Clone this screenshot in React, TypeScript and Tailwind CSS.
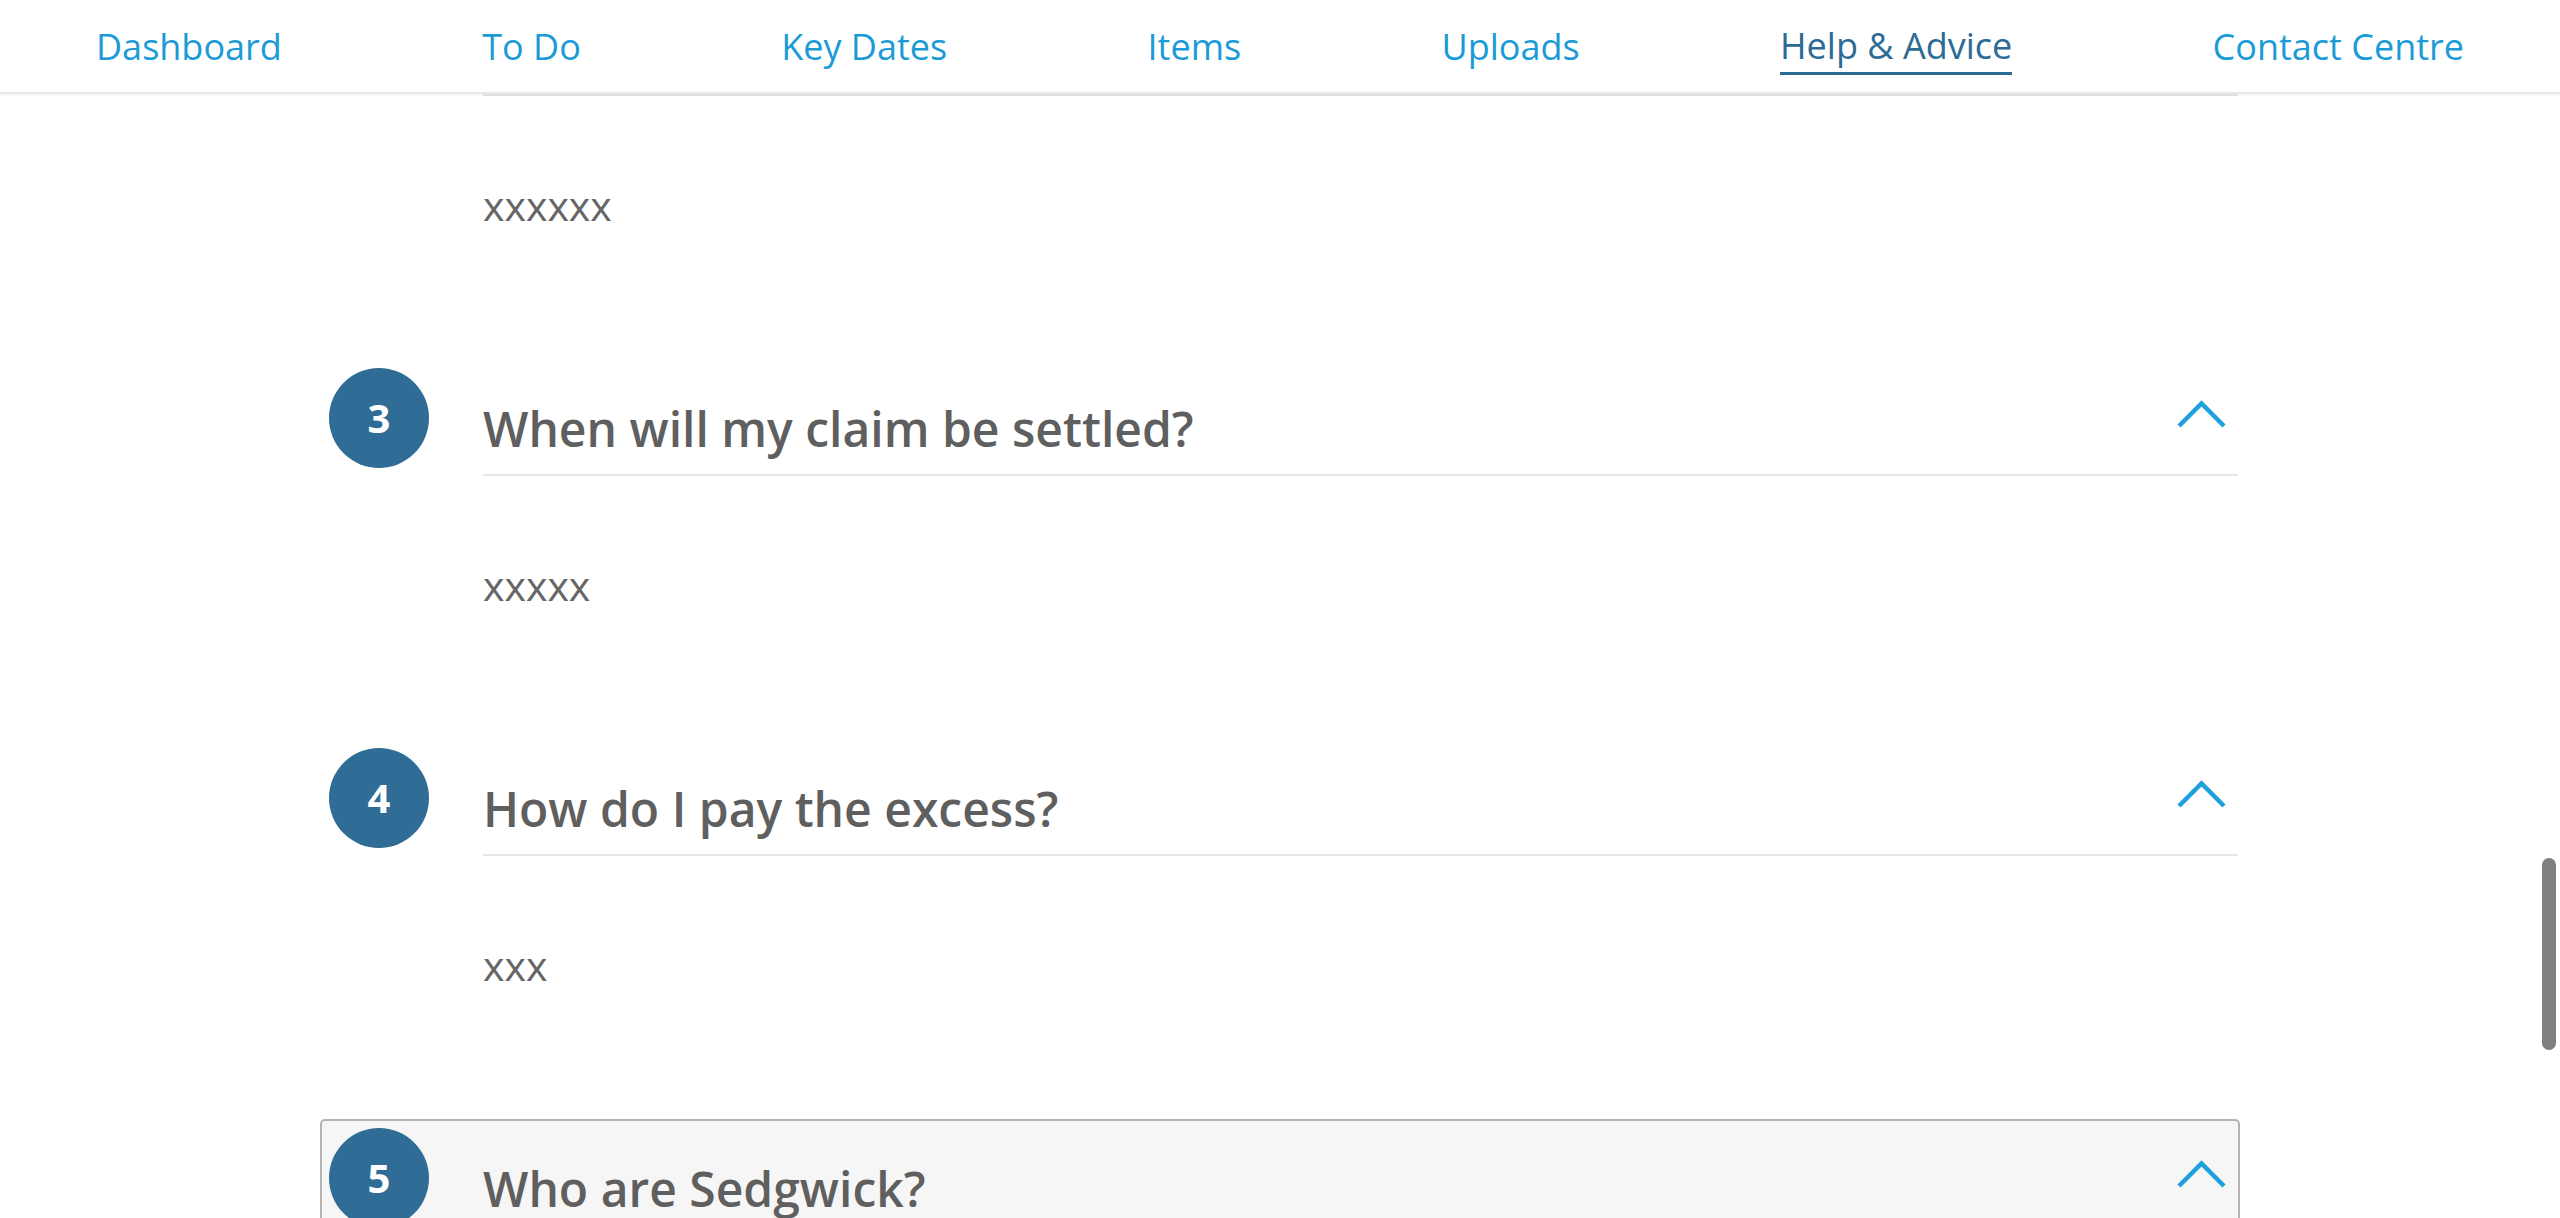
import { useLayoutEffect, useRef } from 'react';

const navItems = ['Dashboard', 'To Do', 'Key Dates', 'Items', 'Uploads', 'Help & Advice', 'Contact Centre'];

const faqs = [
  { q: 'How do I make a claim?', a: 'xxxxxxx' },
  { q: 'What happens after I report my claim?', a: 'xxxxxx' },
  { q: 'When will my claim be settled?', a: 'xxxxx' },
  { q: 'How do I pay the excess?', a: 'xxx' },
  { q: 'Who are Sedgwick?', a: 'xxxx' },
  { q: 'Can I upload documents later?', a: 'xxxxx' },
];

function Chevron() {
  return (
    <svg width="49" height="28" viewBox="0 0 49 28" fill="none" className="shrink-0">
      <path d="M2 26 L24.5 3.5 L47 26" stroke="#1fa0dc" strokeWidth="4.5" />
    </svg>
  );
}

export default function App() {
  const scrollRef = useRef<HTMLDivElement>(null);
  const anchorRef = useRef<HTMLDivElement>(null);

  useLayoutEffect(() => {
    if (scrollRef.current && anchorRef.current) {
      scrollRef.current.scrollTop = anchorRef.current.offsetTop - 359;
    }
  }, []);

  return (
    <div className="relative h-screen overflow-hidden bg-white" style={{ fontFamily: '"Open Sans", "Noto Sans", sans-serif' }}>
      {/* Top navigation */}
      <nav className="absolute top-0 left-0 right-0 z-10 bg-white shadow-[0_2px_3px_rgba(0,0,0,0.12)]">
        <ul className="flex h-[92px] items-center justify-between px-[96px] pt-[4px]">
          {navItems.map((item) => {
            const active = item === 'Help & Advice';
            return (
              <li key={item} className={`pb-[2px] ${active ? 'border-b-[3px] border-[#2d6b94] pb-0' : ''}`}>
                <span className={`block text-[36px] leading-[48px] ${active ? 'text-[#2d6b94]' : 'text-[#1a9bd7]'}`}>{item}</span>
              </li>
            );
          })}
        </ul>
      </nav>

      {/* FAQ list */}
      <div ref={scrollRef} className="relative h-full overflow-hidden">
        <div className="mx-auto w-[1920px]">
          {faqs.map((f, i) => {
            const focused = i === 4;
            return (
              <div key={f.q} ref={i === 2 ? anchorRef : undefined}>
                <div
                  className={`flex gap-[54px] rounded-[5px] border-2 pl-[7px] pt-[7px] ${
                    focused ? 'border-[#b4b4b4] bg-[#f6f6f6]' : 'border-transparent'
                  }`}
                >
                  <div className="flex h-[100px] w-[100px] shrink-0 items-center justify-center rounded-full bg-[#2f6d96] text-[40px] font-bold text-white">
                    {i + 1}
                  </div>
                  <div className="flex h-[108px] flex-1 justify-between border-b-2 border-[#e6e6e6]">
                    <h3 className="self-end pb-[16px] text-[48px] font-semibold leading-[58px] text-[#5f5f5f]">{f.q}</h3>
                    <div className="mr-[12px] mt-[32px]">
                      <Chevron />
                    </div>
                  </div>
                </div>
                <div className="pb-[124px] pl-[163px] pt-[77px] text-[41px] leading-[60px] text-[#666666]">{f.a}</div>
              </div>
            );
          })}
        </div>
      </div>

      {/* Overlay scrollbar */}
      <div className="absolute right-[4px] top-[858px] z-20 h-[192px] w-[14px] rounded-full bg-[#7f7f7f]" />
    </div>
  );
}
